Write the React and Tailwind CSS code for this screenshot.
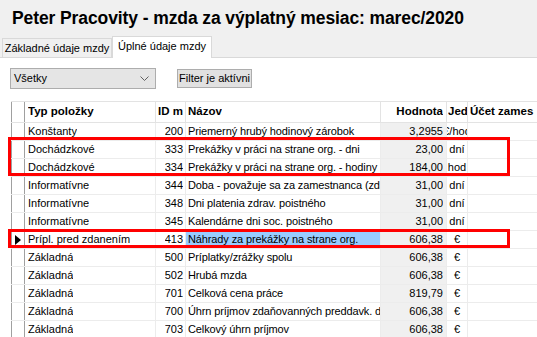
import React from "react";

const rows = [
  ["Konštanty", "200", "Priemerný hrubý hodinový zárobok", "3,2955", "€/hod"],
  ["Dochádzkové", "333", "Prekážky v práci na strane org. - dni", "23,00", "dní"],
  ["Dochádzkové", "334", "Prekážky v práci na strane org. - hodiny", "184,00", "hod"],
  ["Informatívne", "344", "Doba - považuje sa za zamestnanca (zdravotné poistenie)", "31,00", "dní"],
  ["Informatívne", "348", "Dni platenia zdrav. poistného", "31,00", "dní"],
  ["Informatívne", "345", "Kalendárne dni soc. poistného", "31,00", "dní"],
  ["Prípl. pred zdanením", "413", "Náhrady za prekážky na strane org.", "606,38", "€", true],
  ["Základná", "500", "Príplatky/zrážky spolu", "606,38", "€"],
  ["Základná", "502", "Hrubá mzda", "606,38", "€"],
  ["Základná", "701", "Celková cena práce", "819,79", "€"],
  ["Základná", "700", "Úhrn príjmov zdaňovanných preddavk. do poistenia", "606,38", "€"],
  ["Základná", "703", "Celkový úhrn príjmov", "606,38", "€"],
];

function Clip({ children, className = "" }) {
  return <span className={`block overflow-hidden whitespace-nowrap ${className}`}>{children}</span>;
}

export default function App() {
  return (
    <div
      className="relative w-[537px] h-[337px] overflow-hidden bg-white text-black"
      style={{ fontFamily: '"Liberation Sans", Arial, sans-serif' }}
    >
      {/* top gray area */}
      <div className="bg-[#f0f0f0] flex flex-col">
        <div className="h-[36px] flex items-center pl-[12px] pt-[1px] text-[17.5px] font-bold tracking-[-0.1px] whitespace-nowrap">
          Peter Pracovity - mzda za výplatný mesiac: marec/2020
        </div>
        <div className="h-[22px] flex items-end text-[11px]">
          <div className="w-[2px] h-full border-b border-[#d9d9d9]" />
          <div className="h-[20px] w-[110px] border border-[#d9d9d9] flex items-center justify-center whitespace-nowrap">
            Základné údaje mzdy
          </div>
          <div className="h-[22px] w-[100px] bg-white border-t border-x border-[#d9d9d9] flex items-center justify-center whitespace-nowrap pb-[2px]">
            Úplné údaje mzdy
          </div>
          <div className="flex-1 h-full border-b border-[#d9d9d9]" />
        </div>
      </div>

      {/* filter row */}
      <div className="mt-[10px] h-[21px] flex items-center text-[11px]">
        <div className="ml-[10px] w-[146px] h-[21px] bg-[#e5e5e5] border border-[#adadad] flex items-center justify-between pl-[3px] pr-[6px]">
          <span>Všetky</span>
          <svg width="9" height="6" viewBox="0 0 9 6">
            <path d="M0.5 0.5 L4.5 4.5 L8.5 0.5" fill="none" stroke="#606060" strokeWidth="1" />
          </svg>
        </div>
        <div className="ml-[21px] w-[75px] h-[19px] bg-[#e1e1e1] border border-[#adadad] flex items-center justify-center whitespace-nowrap">
          Filter je aktívni
        </div>
      </div>

      {/* grid */}
      <div className="mt-[12px] ml-[11px] border-t border-[#e3e3e3] text-[11px]">
        <div className="flex h-[21px] border-b border-[#e3e3e3] font-bold text-[11.5px]">
          <div className="w-[14px] shrink-0 border-l border-r border-[#a0a0a0]" />
          <div className="w-[131px] shrink-0 border-r border-[#e3e3e3] pl-[3px] flex items-center overflow-hidden"><Clip>Typ položky</Clip></div>
          <div className="w-[30px] shrink-0 border-r border-[#e3e3e3] pl-[2px] flex items-center overflow-hidden"><Clip>ID m</Clip></div>
          <div className="w-[195px] shrink-0 border-r border-[#e3e3e3] pl-[2px] flex items-center overflow-hidden"><Clip>Názov</Clip></div>
          <div className="w-[66px] shrink-0 border-r border-[#e3e3e3] pr-[3px] flex items-center justify-end overflow-hidden"><Clip>Hodnota</Clip></div>
          <div className="w-[21px] shrink-0 border-r border-[#e3e3e3] pl-[1px] flex items-center overflow-hidden"><Clip className="w-[19px]">Jed</Clip></div>
          <div className="w-[80px] shrink-0 pl-[2px] flex items-center overflow-hidden"><Clip className="w-[66px]">Účet zames</Clip></div>
        </div>
        {rows.map((r, i) => (
          <div key={i} className="flex h-[18px] border-b border-[#ececec]">
            <div className="w-[14px] shrink-0 border-l border-r border-[#a0a0a0] flex items-center justify-center">
              {r[5] && (
                <svg width="6" height="10" viewBox="0 0 6 10">
                  <path d="M0 0 L6 5 L0 10 Z" fill="#000" />
                </svg>
              )}
            </div>
            <div className="w-[131px] shrink-0 border-r border-[#ececec] pl-[3px] flex items-center overflow-hidden"><Clip>{r[0]}</Clip></div>
            <div className="w-[30px] shrink-0 border-r border-[#ececec] pr-[2px] flex items-center justify-end overflow-hidden"><Clip>{r[1]}</Clip></div>
            <div className={`w-[195px] shrink-0 border-r border-[#ececec] pl-[2px] flex items-center overflow-hidden tracking-[-0.12px] ${r[5] ? "bg-[#99ccff]" : ""}`}><Clip className="w-[192px]">{r[2]}</Clip></div>
            <div className="w-[66px] shrink-0 border-r border-[#ececec] bg-[#f0f0f0] pr-[3px] flex items-center justify-end overflow-hidden"><Clip>{r[3]}</Clip></div>
            <div className="w-[21px] shrink-0 border-r border-[#ececec] flex items-center justify-center overflow-hidden whitespace-nowrap">{r[4]}</div>
            <div className="w-[80px] shrink-0" />
          </div>
        ))}
      </div>

      {/* red annotation boxes */}
      <div className="absolute left-[8px] top-[137px] w-[502px] h-[39px] border-[3px] border-[#ff0000]" />
      <div className="absolute left-[8px] top-[229px] w-[502px] h-[19px] border-[3px] border-[#ff0000]" />
    </div>
  );
}
